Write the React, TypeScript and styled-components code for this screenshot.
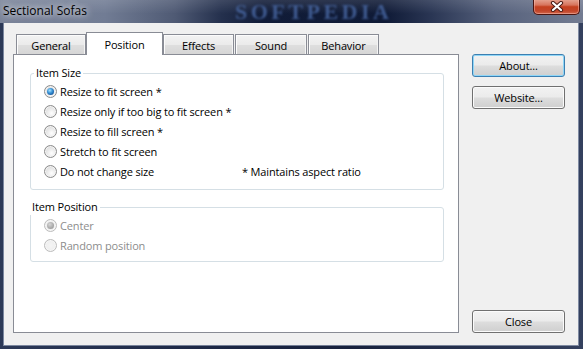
import React from 'react';
import styled, { createGlobalStyle } from 'styled-components';

const Global = createGlobalStyle`
  html, body { margin: 0; padding: 0; background: #1b2744; }
  body { font-family: "Open Sans", "Noto Sans", sans-serif; font-size: 11px; letter-spacing: -0.15px; color: #000; }
  #root { width: 583px; height: 349px; overflow: hidden; }
`;

const Window = styled.div`
  width: 583px;
  height: 349px;
  display: flex;
  flex-direction: column;
  background: linear-gradient(90deg, #2c3957 0%, #1c2744 40%, #18223d 60%, #34405e 100%);
`;

const TitleBar = styled.div`
  position: relative;
  height: 23px;
  flex-shrink: 0;
  display: flex;
  justify-content: space-between;
  align-items: flex-start;
  background:
    linear-gradient(180deg, rgba(255, 255, 255, 0.12) 0%, rgba(255, 255, 255, 0) 60%),
    linear-gradient(90deg, #7a8499 0%, #717c94 18%, #4f5a74 30%, #24304d 38%, #111c38 45%, #0f1a36 66%, #2a3654 74%, #56617c 85%, #737c92 100%);
`;

const Watermark = styled.span`
  position: absolute;
  left: 235px;
  top: 0;
  line-height: 23px;
  font-family: "Liberation Serif", serif;
  font-weight: bold;
  font-size: 22px;
  letter-spacing: 3.5px;
  color: rgba(72, 104, 164, 0.8);
  filter: blur(1.3px);
  pointer-events: none;
`;

const Caption = styled.span`
  position: relative;
  margin: 3px 0 0 3px;
  line-height: 16px;
  font-size: 12px;
  letter-spacing: 0;
  color: #000;
  text-shadow: 0 0 6px rgba(255, 255, 255, 0.9), 0 0 10px rgba(255, 255, 255, 0.6);
`;

const CloseBox = styled.div`
  position: relative;
  width: 47px;
  height: 16px;
  margin: -1px 3px 0 0;
  box-sizing: border-box;
  border: 1px solid #4a1410;
  border-top: none;
  border-radius: 0 0 5px 5px;
  display: flex;
  align-items: center;
  justify-content: center;
  background: linear-gradient(180deg, #e6a796 0%, #d7745d 40%, #c4401f 52%, #c2452a 80%, #d2694d 100%);
  box-shadow: inset 0 0 0 1px rgba(255, 200, 190, 0.45);
`;

const Frame = styled.div`
  flex: 1;
  display: flex;
  padding: 0 5px 4px 4px;
  min-height: 0;
`;

const Client = styled.div`
  flex: 1;
  display: flex;
  background: #f0f0f0;
  padding: 9px 13px 12px 9px;
  box-shadow: 0 0 0 1px rgba(190, 200, 218, 0.55);
`;

const TabArea = styled.div`
  width: 446px;
  display: flex;
  flex-direction: column;
`;

const TabStrip = styled.div`
  height: 22px;
  display: flex;
  align-items: flex-end;
  padding-left: 3px;
`;

const Tab = styled.div<{ $w: number; $active?: boolean; $ml?: number }>`
  position: relative;
  box-sizing: border-box;
  width: ${p => p.$w}px;
  margin-left: ${p => p.$ml ?? 0}px;
  height: ${p => (p.$active ? 23 : 20)}px;
  margin-bottom: ${p => (p.$active ? -1 : 0)}px;
  z-index: ${p => (p.$active ? 2 : 1)};
  border: 1px solid #898c95;
  border-bottom: none;
  display: flex;
  align-items: center;
  justify-content: center;
  padding-top: ${p => (p.$active ? 0 : 1)}px;
  background: ${p =>
    p.$active ? '#ffffff' : 'linear-gradient(180deg, #f3f3f3 0%, #ebebeb 50%, #dedede 55%, #d6d6d6 100%)'};
  box-shadow: ${p => (p.$active ? 'none' : 'inset 1px 1px 0 #fcfcfc, inset -1px 0 0 #f4f4f4')};
`;

const Panel = styled.div`
  flex: 1;
  background: #fff;
  border: 1px solid #898c95;
  padding: 10px 14px 0 16px;
  display: flex;
  flex-direction: column;
`;

const Group = styled.fieldset<{ $gap: number; $pb: number }>`
  margin: ${p => p.$gap}px 0 0 0;
  padding: 0 0 ${p => p.$pb}px 0;
  border: 1px solid #d5dfe5;
  border-radius: 3px;
  min-inline-size: 0;
`;

const Legend = styled.legend<{ $indent: number }>`
  margin-left: ${p => p.$indent}px;
  padding: 0 2px;
  line-height: 16px;
  color: #000;
`;

const Row = styled.div<{ $disabled?: boolean }>`
  height: 20px;
  display: grid;
  grid-template-columns: 198px 1fr;
  align-items: center;
  padding-left: 13px;
  color: ${p => (p.$disabled ? '#8d8d8d' : '#000')};
`;

const Choice = styled.label`
  display: flex;
  align-items: center;
  white-space: nowrap;
`;

const Radio = styled.span<{ $checked?: boolean; $disabled?: boolean }>`
  position: relative;
  width: 13px;
  height: 13px;
  box-sizing: border-box;
  border-radius: 50%;
  margin-right: 3px;
  flex-shrink: 0;
  border: 1px solid ${p => (p.$disabled ? '#bcbcbc' : '#8b8b8b')};
  background: ${p =>
    p.$disabled
      ? 'radial-gradient(circle at 50% 50%, #f4f4f4 0%, #ececec 100%)'
      : 'radial-gradient(circle at 60% 65%, #ffffff 0%, #e9e9e9 45%, #cfcfcf 100%)'};
  box-shadow: inset 0 0 0 1px ${p => (p.$disabled ? '#f6f6f6' : '#f4f4f4')};

  &::after {
    content: '';
    display: ${p => (p.$checked ? 'block' : 'none')};
    position: absolute;
    left: 2px;
    top: 2px;
    width: 7px;
    height: 7px;
    border-radius: 50%;
    background: ${p =>
      p.$disabled
        ? 'radial-gradient(circle at 40% 35%, #d6d6d6 0%, #a9a9a9 60%, #8f8f8f 100%)'
        : 'radial-gradient(circle at 40% 35%, #a8e3ff 0%, #3b95d8 40%, #15549a 80%, #0e3f78 100%)'};
  }
`;

const Note = styled.span`
  white-space: nowrap;
`;

const ButtonColumn = styled.div`
  width: 93px;
  margin-left: 13px;
  padding-top: 22px;
  display: flex;
  flex-direction: column;
`;

const Button = styled.button<{ $focused?: boolean; $mt: string }>`
  height: 23px;
  width: 93px;
  box-sizing: border-box;
  margin: ${p => p.$mt} 0 0 0;
  border: 1px solid ${p => (p.$focused ? '#3c7fb1' : '#707070')};
  border-radius: 3px;
  padding: 0;
  font-family: inherit;
  font-size: 11px;
  letter-spacing: inherit;
  color: #000;
  background: linear-gradient(180deg, #f2f2f2 0%, #ebebeb 48%, #dddddd 52%, #cfcfcf 100%);
  box-shadow: inset 0 0 0 1px ${p => (p.$focused ? '#8fd6f7' : '#fbfbfb')};
`;

const TABS = [
  { label: 'General', w: 70 },
  { label: 'Position', w: 77, active: true },
  { label: 'Effects', w: 71 },
  { label: 'Sound', w: 72, ml: 1 },
  { label: 'Behavior', w: 71, ml: 1 },
];

const SIZE_OPTIONS = [
  'Resize to fit screen *',
  'Resize only if too big to fit screen *',
  'Resize to fill screen *',
  'Stretch to fit screen',
  'Do not change size',
];

export default function App() {
  return (
    <>
      <Global />
      <Window>
        <TitleBar>
          <Watermark>SOFTPEDIA</Watermark>
          <Caption>Sectional Sofas</Caption>
          <CloseBox>
            <svg width="14" height="11" viewBox="0 0 14 11">
              <path d="M3 2 L11 9 M11 2 L3 9" stroke="#4a1a14" strokeWidth="4.2" strokeLinecap="round" fill="none" />
              <path d="M3 2 L11 9 M11 2 L3 9" stroke="#ffffff" strokeWidth="2.2" strokeLinecap="round" fill="none" />
            </svg>
          </CloseBox>
        </TitleBar>
        <Frame>
          <Client>
            <TabArea>
              <TabStrip>
                {TABS.map(t => (
                  <Tab key={t.label} $w={t.w} $active={t.active} $ml={t.ml}>{t.label}</Tab>
                ))}
              </TabStrip>
              <Panel>
                <Group $gap={0} $pb={8}>
                  <Legend $indent={3}>Item Size</Legend>
                  {SIZE_OPTIONS.map((o, i) => (
                    <Row key={o}>
                      <Choice><Radio $checked={i === 0} />{o}</Choice>
                      {i === 4 && <Note>* Maintains aspect ratio</Note>}
                    </Row>
                  ))}
                </Group>
                <Group $gap={9} $pb={6}>
                  <Legend $indent={-1}>Item Position</Legend>
                  <Row $disabled><Choice><Radio $checked $disabled />Center</Choice></Row>
                  <Row $disabled><Choice><Radio $disabled />Random position</Choice></Row>
                </Group>
              </Panel>
            </TabArea>
            <ButtonColumn>
              <Button $focused $mt="0">About...</Button>
              <Button $mt="9px">Website...</Button>
              <Button $mt="auto">Close</Button>
            </ButtonColumn>
          </Client>
        </Frame>
      </Window>
    </>
  );
}
